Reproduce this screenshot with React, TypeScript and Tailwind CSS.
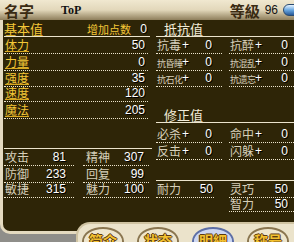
import React from "react";

const CJK = "font-['Noto_Sans_CJK_SC',sans-serif]";
const NUM = "font-['Liberation_Sans',sans-serif] text-[12px] leading-none text-white [text-shadow:1px_1px_0_#000]";
const DOT = "border-b border-dotted border-[#ece4cc]";
const GOLD = "text-[#f4c838]";
const LBL = "text-[#d6cfba]";

function TopRow({ label, value, h }: { label: string; value: string; h: string }) {
  return (
    <div className={`flex ${h} items-end justify-between mr-[4px] pb-[1px] ${DOT}`}>
      <span className={`ml-[1px] border-b border-[#d8a820] text-[12px] leading-[12px] ${GOLD}`}>{label}</span>
      <span className={`${NUM} pr-[3px] pb-[1px]`}>{value}</span>
    </div>
  );
}

function LowRow({ a, av, b, bv, h }: { a: string; av: string; b: string; bv: string; h: string }) {
  return (
    <div className={`flex ${h} items-end`}>
      <div className={`flex w-[70px] h-full items-end justify-between pb-[2px] ${DOT}`}>
        <span className={`ml-[1px] text-[12px] leading-none ${LBL}`}>{a}</span>
        <span className={`${NUM} pr-[8px]`}>{av}</span>
      </div>
      <div className={`ml-[9px] flex w-[66px] h-full items-end justify-between pb-[2px] ${DOT}`}>
        <span className={`ml-[3px] text-[12px] leading-none ${LBL}`}>{b}</span>
        <span className={`${NUM} pr-[5px]`}>{bv}</span>
      </div>
    </div>
  );
}

function ResCell({ label, value, small, w, pr }: { label: string; value: string; small?: boolean; w: string; pr: string }) {
  return (
    <div className={`flex ${w} h-full items-end pb-[2px] ${DOT}`}>
      <span className={`ml-[1px] w-[25px] whitespace-nowrap leading-none ${LBL} ${small ? "text-[9px] tracking-[-0.5px]" : "text-[12px]"}`}>{label}</span>
      <span className={`${NUM}`}>+</span>
      <span className={`${NUM} ml-auto ${pr}`}>{value}</span>
    </div>
  );
}

function ResRow({ h, a, av, b, bv, small }: { h: string; a: string; av: string; b: string; bv: string; small?: boolean }) {
  return (
    <div className={`flex ${h} items-end`}>
      <ResCell label={a} value={av} small={small} w="w-[66px]" pr="pr-[10px]" />
      <div className="w-[7px]" />
      <ResCell label={b} value={bv} small={small} w="flex-1" pr="pr-[6px]" />
    </div>
  );
}

function Btn({ text, active }: { text: string; active?: boolean }) {
  return (
    <div
      className={`flex h-[28px] w-[42px] shrink-0 items-start justify-center rounded-[50%] border-2 pt-[4px] ${
        active ? "border-[#5d6fa6] bg-[#cdd7f2]" : "border-[#8a7650] bg-[#efe6cd]"
      }`}
    >
      <span className="text-[14px] font-bold leading-none text-[#f2c030] [text-shadow:1px_0_0_#5a3a10,-1px_0_0_#5a3a10,0_1px_0_#5a3a10,0_-1px_0_#5a3a10]">
        {text}
      </span>
    </div>
  );
}

export default function App() {
  return (
    <div className={`relative h-[242px] w-[294px] overflow-hidden bg-[#8f8e8a] ${CJK}`}>
      {/* top bar */}
      <div className="flex h-[20px] items-center bg-gradient-to-b from-[#f0e8d0] via-[#e2d7ba] to-[#8f7f5c]">
        <span className="ml-[4px] text-[15px] font-bold leading-none text-[#3a2a12]">名字</span>
        <span className="ml-[27px] font-['Liberation_Serif',serif] text-[12px] font-bold leading-none text-[#111]">ToP</span>
        <span className="ml-auto text-[15px] font-bold leading-none text-[#3a2a12]">等級</span>
        <span className="ml-[5px] font-['Liberation_Sans',sans-serif] text-[12px] leading-none text-[#111]">96</span>
        <span className="ml-[5px] mr-[-6px] h-[12px] w-[17px] rounded-full border border-[#2a4a70] bg-gradient-to-b from-[#e8f4ff] via-[#6aa8e0] to-[#2a5a98]" />
      </div>

      {/* main panel */}
      <div className="flex h-[214px] rounded-bl-[10px] border-b-[3px] border-l-[3px] border-[#e4dac0] bg-[#2e2507]">
        {/* left */}
        <div className="flex w-[149px] flex-col pl-[1px]">
          <div className="mr-[2px] flex h-[17px] items-end border-b border-[#ece4cc] pb-[1px]">
            <span className={`text-[13px] leading-none ${GOLD}`}>基本值</span>
            <span className={`ml-[44px] text-[11px] leading-none ${GOLD}`}>增加点数</span>
            <span className={`${NUM} ml-auto pr-[3px]`}>0</span>
          </div>
          <TopRow label="体力" value="50" h="h-[17px]" />
          <TopRow label="力量" value="0" h="h-[17px]" />
          <TopRow label="强度" value="35" h="h-[16px]" />
          <TopRow label="速度" value="120" h="h-[15px]" />
          <TopRow label="魔法" value="205" h="h-[17px]" />
          <div className="mt-[29px] border-t border-[#ece4cc]" />
          <LowRow a="攻击" av="81" b="精神" bv="307" h="h-[17px]" />
          <LowRow a="防御" av="233" b="回复" bv="99" h="h-[17px]" />
          <LowRow a="敏捷" av="315" b="魅力" bv="100" h="h-[15px]" />
        </div>

        {/* right */}
        <div className="flex flex-1 flex-col pl-[4px]">
          <div className="flex h-[17px] items-end border-b border-[#ece4cc] pb-[1px]">
            <span className="ml-[8px] text-[13px] leading-none text-[#f2ecd8]">抵抗值</span>
          </div>
          <ResRow h="h-[17px]" a="抗毒" av="0" b="抗醉" bv="0" />
          <ResRow h="h-[17px]" a="抗昏睡" av="0" b="抗混乱" bv="0" small />
          <ResRow h="h-[16px]" a="抗石化" av="0" b="抗遗忘" bv="0" small />
          <div className="flex h-[36px] items-end border-b border-[#ece4cc] pb-[1px]">
            <span className="ml-[8px] text-[13px] leading-none text-[#f2ecd8]">修正值</span>
          </div>
          <ResRow h="h-[20px]" a="必杀" av="0" b="命中" bv="0" />
          <ResRow h="h-[17px]" a="反击" av="0" b="闪躲" bv="0" />
          <div className="mt-[20px] border-t border-[#ece4cc]" />
          <div className="flex h-[17px] items-end">
            <div className={`flex w-[58px] h-full items-end justify-between pb-[2px] ${DOT}`}>
              <span className={`ml-[1px] text-[12px] leading-none ${LBL}`}>耐力</span>
              <span className={`${NUM} pr-[1px]`}>50</span>
            </div>
            <div className={`ml-[15px] flex flex-1 h-full items-end justify-between pb-[2px] ${DOT}`}>
              <span className={`ml-[1px] text-[12px] leading-none ${LBL}`}>灵巧</span>
              <span className={`${NUM} pr-[6px]`}>50</span>
            </div>
          </div>
          <div className="flex h-[14px] items-end">
            <div className="w-[73px]" />
            <div className={`flex flex-1 h-full items-end justify-between pb-[1px] ${DOT}`}>
              <span className={`ml-[1px] text-[12px] leading-none ${LBL}`}>智力</span>
              <span className={`${NUM} pr-[6px]`}>50</span>
            </div>
          </div>
        </div>
      </div>

      {/* bottom tab bar (overlays panel edge) */}
      <div className="absolute bottom-0 left-[76px] right-0 top-[222px] overflow-hidden rounded-tl-[14px] border-t-2 border-l-2 border-[#cfc3a2] bg-[#ebe3cb]">
        <div className="flex gap-[13px] pl-[4px] pt-[3px]">
          <Btn text="简介" />
          <Btn text="状态" />
          <Btn text="明細" active />
          <Btn text="称号" />
        </div>
      </div>
    </div>
  );
}
